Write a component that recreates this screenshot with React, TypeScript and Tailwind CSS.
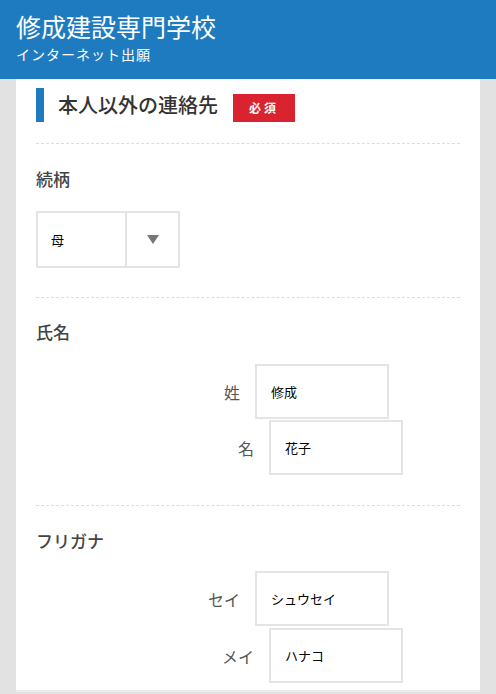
const font = { fontFamily: '"Noto Sans CJK JP", "Noto Sans", sans-serif' };

function Divider() {
  return <div className="border-t border-dashed border-[#dcdcdc]" />;
}

function NameRow({ label, value, shift }: { label: string; value: string; shift?: boolean }) {
  return (
    <div className={`flex items-center ${shift ? 'ml-[169px]' : 'ml-[155px]'}`}>
      <span className="w-[50px] whitespace-nowrap pr-[1px] text-right text-[16px] text-[#555]">{label}</span>
      <div className="ml-[14px] flex h-[55px] w-[134px] items-center border-2 border-[#e4e4e4] pl-[14px] text-[13px] text-black">
        {value}
      </div>
    </div>
  );
}

export default function App() {
  return (
    <div className="h-[694px] w-[496px] overflow-hidden bg-[#e2e2e2]" style={font}>
      <header className="h-[79px] bg-[#1f7bc0] px-4 pt-[9px] text-white">
        <h1 className="text-[25px] leading-[34px]">修成建設専門学校</h1>
        <p className="mt-[2px] text-[14px] leading-[18px] tracking-[1px]">インターネット出願</p>
      </header>

      <main className="mx-4 h-[613px] border-b-2 border-[#ececec] bg-white px-5">
        <div className="flex items-center pt-[9px]">
          <div className="h-[34px] w-[8px] bg-[#1f7bc0]" />
          <h2 className="ml-[14px] text-[20px] font-medium text-[#333]">本人以外の連絡先</h2>
          <span className="ml-[15px] mt-[5px] flex h-[28px] w-[62px] items-center justify-center bg-[#d9232e] text-[12px] font-bold tracking-[3px] text-white">
            必須
          </span>
        </div>

        <div className="mt-[21px]">
          <Divider />
        </div>

        <section className="pb-[29px] pt-[24px]">
          <p className="text-[17px] font-medium leading-[22px] text-[#444]">続柄</p>
          <div className="mt-[21px] flex h-[57px] w-[144px] border-2 border-[#e4e4e4]">
            <div className="flex w-[89px] items-center border-r-2 border-[#e4e4e4] pl-[13px] text-[13px] text-black">母</div>
            <div className="flex flex-1 items-center justify-center">
              <svg width="12" height="9" viewBox="0 0 12 9">
                <path d="M0 0h12L6 9z" fill="#777" />
              </svg>
            </div>
          </div>
        </section>

        <Divider />

        <section className="pb-[30px] pt-[23px]">
          <p className="text-[17px] font-medium leading-[22px] text-[#444]">氏名</p>
          <div className="mt-[21px] flex flex-col gap-[1px]">
            <NameRow label="姓" value="修成" />
            <NameRow label="名" value="花子" shift />
          </div>
        </section>

        <Divider />

        <section className="pt-[24px]">
          <p className="text-[17px] font-medium leading-[22px] text-[#444]">フリガナ</p>
          <div className="mt-[19px] flex flex-col gap-[2px]">
            <NameRow label="セイ" value="シュウセイ" />
            <NameRow label="メイ" value="ハナコ" shift />
          </div>
        </section>
      </main>
    </div>
  );
}
